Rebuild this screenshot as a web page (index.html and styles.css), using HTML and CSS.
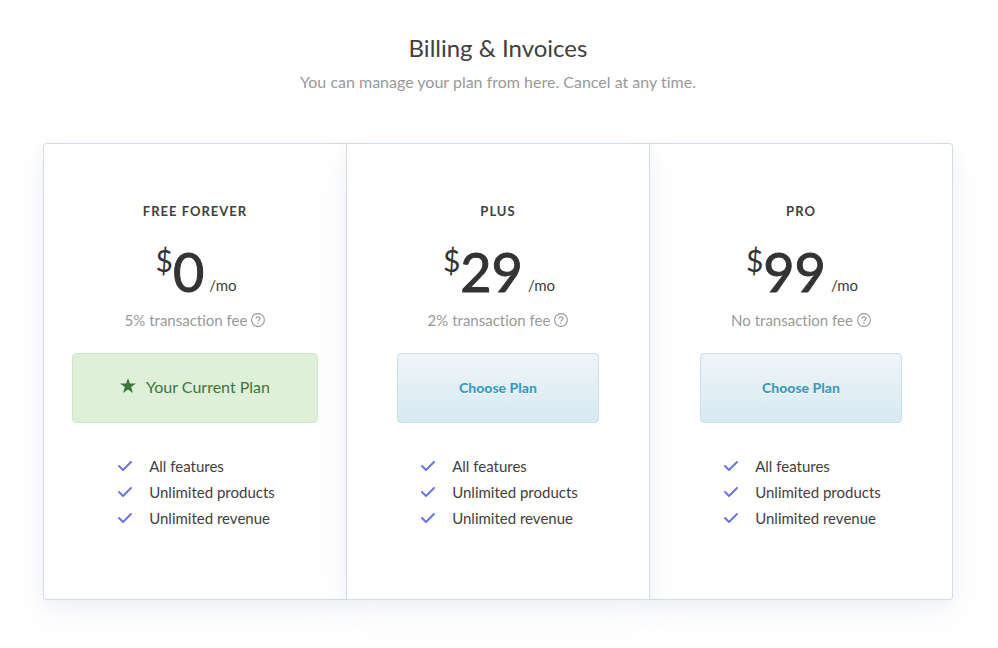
FILE: index.html
```html
<!DOCTYPE html>
<html lang="en">
<head>
  <meta charset="UTF-8">
  <meta name="viewport" content="width=device-width, initial-scale=1.0">
  <title>Billing &amp; Invoices</title>
  <link rel="stylesheet" href="styles.css">
</head>
<body>
  <svg class="sprite" aria-hidden="true">
    <symbol id="icon-check" viewBox="0 0 14 10">
      <path d="M1 5 L5 9 L13 1" fill="none" stroke="currentColor" stroke-width="1.9" stroke-linecap="round" stroke-linejoin="round"></path>
    </symbol>
    <symbol id="icon-help" viewBox="0 0 14 14">
      <circle cx="7" cy="7" r="6.4" fill="none" stroke="currentColor" stroke-width="1.1"></circle>
      <path d="M5 5.6 C5 3.3 9 3.3 9 5.5 C9 6.9 7 6.9 7 8.4" fill="none" stroke="currentColor" stroke-width="1.2"></path>
      <circle cx="7" cy="10.2" r="0.8" fill="currentColor"></circle>
    </symbol>
    <symbol id="icon-star" viewBox="0 0 16 15">
      <path d="M8 0 L9.9 5.6 H16 L11.1 9.1 L13 15 L8 11.4 L3 15 L4.9 9.1 L0 5.6 H6.1 Z" fill="currentColor"></path>
    </symbol>
  </svg>

  <header class="page-header">
    <h1>Billing &amp; Invoices</h1>
    <p>You can manage your plan from here. Cancel at any time.</p>
  </header>

  <main class="plans">
    <section class="plan plan-first">
      <h2>Free Forever</h2>
      <div class="price"><span class="currency">$</span><span class="amount">0</span><span class="period">/mo</span></div>
      <p class="fee">5% transaction fee <svg class="help"><use href="#icon-help"></use></svg></p>
      <div class="current"><svg class="star"><use href="#icon-star"></use></svg>Your Current Plan</div>
      <ul class="features">
        <li><svg class="check"><use href="#icon-check"></use></svg>All features</li>
        <li><svg class="check"><use href="#icon-check"></use></svg>Unlimited products</li>
        <li><svg class="check"><use href="#icon-check"></use></svg>Unlimited revenue</li>
      </ul>
    </section>

    <section class="plan plan-featured">
      <h2>Plus</h2>
      <div class="price"><span class="currency">$</span><span class="amount">29</span><span class="period">/mo</span></div>
      <p class="fee">2% transaction fee <svg class="help"><use href="#icon-help"></use></svg></p>
      <button type="button" class="choose">Choose Plan</button>
      <ul class="features">
        <li><svg class="check"><use href="#icon-check"></use></svg>All features</li>
        <li><svg class="check"><use href="#icon-check"></use></svg>Unlimited products</li>
        <li><svg class="check"><use href="#icon-check"></use></svg>Unlimited revenue</li>
      </ul>
    </section>

    <section class="plan plan-last">
      <h2>Pro</h2>
      <div class="price"><span class="currency">$</span><span class="amount">99</span><span class="period">/mo</span></div>
      <p class="fee">No transaction fee <svg class="help"><use href="#icon-help"></use></svg></p>
      <button type="button" class="choose">Choose Plan</button>
      <ul class="features">
        <li><svg class="check"><use href="#icon-check"></use></svg>All features</li>
        <li><svg class="check"><use href="#icon-check"></use></svg>Unlimited products</li>
        <li><svg class="check"><use href="#icon-check"></use></svg>Unlimited revenue</li>
      </ul>
    </section>
  </main>
</body>
</html>
```
FILE: styles.css
```css
:root {
  --text: #3f4041;
  --muted: #999;
  --border: #d5dce2;
  --accent: #6772e5;
}

* {
  box-sizing: border-box;
}

body {
  margin: 0;
  padding: 33px 45px 48px 43px;
  font-family: Lato, 'Open Sans', sans-serif;
  font-size: 15px;
  font-variant-ligatures: none;
  color: var(--text);
  background: #fff;
}

h1, h2, p, ul {
  margin: 0;
  padding: 0;
}

.sprite {
  display: none;
}

.page-header {
  text-align: center;
  margin-bottom: 49px;
}

h1 {
  font-size: 24px;
  line-height: 30px;
  font-weight: 400;
}

.page-header p {
  margin-top: 7px;
  font-size: 16px;
  line-height: 24px;
  color: var(--muted);
}

.plans {
  display: flex;
}

.plan {
  position: relative;
  flex: 1;
  display: flex;
  flex-direction: column;
  align-items: center;
  padding: 57px 28px 68px;
  background: #fff;
  border: 1px solid var(--border);
  box-shadow: 0 15px 35px rgba(50, 80, 140, 0.05), 0 5px 15px rgba(50, 90, 150, 0.05);
}

.plan-first {
  border-right: none;
  border-radius: 4px 0 0 4px;
}

.plan-featured {
  z-index: 1;
}

.plan-last {
  border-left: none;
  border-radius: 0 4px 4px 0;
}

h2 {
  font-size: 13px;
  line-height: 20px;
  font-weight: 700;
  letter-spacing: 1px;
  text-transform: uppercase;
}

.price {
  display: flex;
  align-items: flex-start;
  margin-top: 20px;
  padding-left: 2px;
  color: #323334;
}

.currency {
  font-size: 30px;
  line-height: 38px;
}

.amount {
  font-size: 54px;
  line-height: 62px;
  -webkit-text-stroke: 1px;
}

.period {
  margin: 34px 0 0 5px;
  font-size: 15px;
  line-height: 20px;
  color: var(--text);
}

.fee {
  display: flex;
  align-items: center;
  gap: 4px;
  margin-top: 7px;
  line-height: 20px;
  color: var(--muted);
}

.help {
  width: 14px;
  height: 14px;
}

.current,
.choose {
  height: 70px;
  margin-top: 23px;
  padding-bottom: 3px;
  border-radius: 4px;
}

.current {
  display: flex;
  align-items: center;
  justify-content: center;
  align-self: stretch;
  gap: 10px;
  font-size: 16px;
  color: #3c763d;
  background: #dff0d8;
  border: 1px solid #d0e9c6;
}

.star {
  width: 16px;
  height: 15px;
  margin-bottom: 3px;
}

.choose {
  width: 202px;
  font-family: inherit;
  font-size: 14px;
  font-weight: 900;
  color: #3a9bc1;
  text-shadow: 0 1px 0 #fff;
  background: linear-gradient(#eff5f8, #d7e9f2);
  border: 1px solid #c9e1ea;
  cursor: pointer;
}

.features {
  margin-top: 30px;
  padding-left: 3px;
  list-style: none;
}

.features li {
  display: flex;
  align-items: center;
  gap: 17px;
  line-height: 26px;
}

.check {
  width: 14px;
  height: 10px;
  color: var(--accent);
}
```
